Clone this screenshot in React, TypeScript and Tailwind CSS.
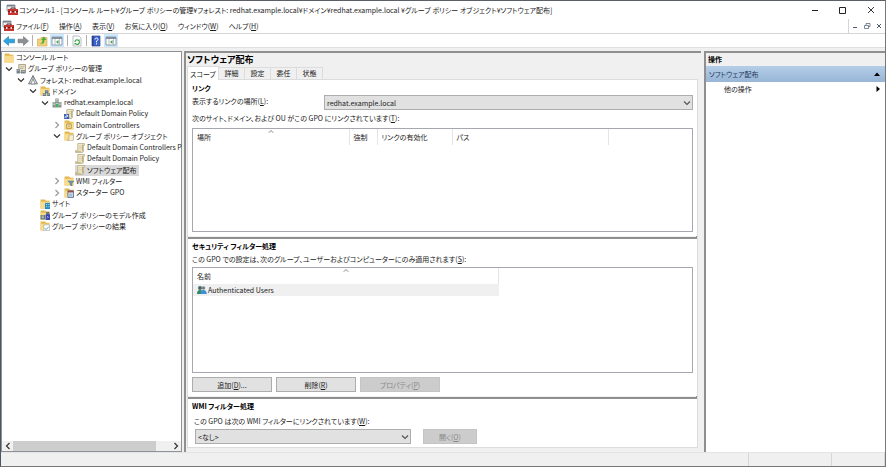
import React from 'react';

type IconKind =
  | 'folder'
  | 'manage'
  | 'forest'
  | 'domains'
  | 'domain'
  | 'link'
  | 'ou'
  | 'gpoFolder'
  | 'scroll'
  | 'wmi'
  | 'starter'
  | 'site'
  | 'model'
  | 'result';

interface TreeItem {
  label: string;
  icon: IconKind;
  indent: string;
  state?: 'open' | 'closed';
  selected?: boolean;
}

const treeItems: TreeItem[] = [
  { label: 'コンソール ルート', icon: 'folder', indent: 'pl-0' },
  { label: 'グループ ポリシーの管理', icon: 'manage', indent: 'pl-[1px]', state: 'open' },
  { label: 'フォレスト: redhat.example.local', icon: 'forest', indent: 'pl-[13px]', state: 'open' },
  { label: 'ドメイン', icon: 'domains', indent: 'pl-[25px]', state: 'open' },
  { label: 'redhat.example.local', icon: 'domain', indent: 'pl-[37px]', state: 'open' },
  { label: 'Default Domain Policy', icon: 'link', indent: 'pl-[60px]' },
  { label: 'Domain Controllers', icon: 'ou', indent: 'pl-[49px]', state: 'closed' },
  { label: 'グループ ポリシー オブジェクト', icon: 'gpoFolder', indent: 'pl-[49px]', state: 'open' },
  { label: 'Default Domain Controllers P', icon: 'scroll', indent: 'pl-[71px]' },
  { label: 'Default Domain Policy', icon: 'scroll', indent: 'pl-[71px]' },
  { label: 'ソフトウェア配布', icon: 'scroll', indent: 'pl-[71px]', selected: true },
  { label: 'WMI フィルター', icon: 'wmi', indent: 'pl-[49px]', state: 'closed' },
  { label: 'スターター GPO', icon: 'starter', indent: 'pl-[49px]', state: 'closed' },
  { label: 'サイト', icon: 'site', indent: 'pl-9' },
  { label: 'グループ ポリシーのモデル作成', icon: 'model', indent: 'pl-9' },
  { label: 'グループ ポリシーの結果', icon: 'result', indent: 'pl-9' },
];

const menus = [
  { label: 'ファイル', accel: 'F' },
  { label: '操作', accel: 'A' },
  { label: '表示', accel: 'V' },
  { label: 'お気に入り', accel: 'O' },
  { label: 'ウィンドウ', accel: 'W' },
  { label: 'ヘルプ', accel: 'H' },
];

const Accel = ({ k }: { k: string }) => (
  <>
    (<span className="underline">{k}</span>)
  </>
);

const FolderShape = () => (
  <>
    <path d="M1 1h4l1 1h3v7H1z" fill="#e2b84e" />
    <path d="M1 3h8v6H1z" fill="#f8dc8c" />
  </>
);

const ScrollShape = () => (
  <>
    <path d="M3 1h6v1.500H8V8q0 1-1 1H1V7.500h2z" fill="#f4ecca" stroke="#a39a78" strokeWidth=".6" />
    <path d="M4 3h3M4 4.500h3M4 6h3" stroke="#c3b88f" strokeWidth=".5" />
    <path d="M1 7.500h5V9H1z" fill="#c9bd8d" />
    <path d="M7.300 2v6" stroke="#b0a06a" strokeWidth=".7" />
  </>
);

const TreeIcon = ({ kind }: { kind: IconKind }) => (
  <svg viewBox="0.500 0.500 9 9" className="h-[10px] w-[10px] shrink-0" aria-hidden="true">
    {kind === 'folder' && <FolderShape />}
    {kind === 'manage' && (
      <>
        <path d="M3 1h6v7H2V7h1z" fill="#eee6c4" stroke="#817b68" strokeWidth=".6" />
        <path d="M4 3h4M4 4.500h3" stroke="#8e8872" strokeWidth=".5" />
        <path d="M1 5h3v4H1zM5 6h4v3H5z" fill="#77818a" />
        <path d="M1.500 6h2M5.500 7h3" stroke="#dce3e8" strokeWidth=".6" />
      </>
    )}
    {kind === 'forest' && (
      <>
        <path d="M5 1 9 8.500H1z" fill="#d9dde0" stroke="#666e74" strokeWidth=".8" />
        <path d="m5 4 1.800 4.500H3.200zM5 1v3" fill="#fff" stroke="#666e74" strokeWidth=".6" />
      </>
    )}
    {kind === 'domains' && (
      <>
        <FolderShape />
        <path d="M5 4h3v3H5zM3 7h3v2.500H3zM7 7h2.500v2.500H7z" fill="#63798b" />
        <path d="M5.500 5h2M3.500 8h2M7.500 8H9" stroke="#cfe1ed" strokeWidth=".6" />
      </>
    )}
    {kind === 'domain' && (
      <>
        <path d="M3.500 1h3v4h-3zM1 4h3v5H1zM6 4h3v5H6z" fill="#84918b" />
        <path d="M4 2h2M4 3.300h2M1.500 5h2M1.500 6.500h2M6.500 5h2M6.500 6.500h2" stroke="#e2efe7" strokeWidth=".6" />
        <path d="M4 5.500h2V9H4z" fill="#43b45c" />
      </>
    )}
    {kind === 'link' && (
      <>
        <ScrollShape />
        <path d="M.5 5h4.500v4.500H.5z" fill="#3f63b5" />
        <path d="M1.300 8.700q0-2 2-2M2.500 5.600 4.200 6.700 2.500 7.900" fill="none" stroke="#fff" strokeWidth=".7" />
      </>
    )}
    {kind === 'ou' && (
      <>
        <FolderShape />
        <path d="M3 4h4v4H3z" fill="#fff0b5" stroke="#967329" strokeWidth=".6" />
        <path d="M4 5h2M4 6.500h2" stroke="#967329" strokeWidth=".5" />
      </>
    )}
    {kind === 'gpoFolder' && (
      <>
        <FolderShape />
        <path d="M5 4h4v4l-1 1.300H4V8h1z" fill="#f6f0d8" stroke="#a39a78" strokeWidth=".5" />
      </>
    )}
    {kind === 'scroll' && <ScrollShape />}
    {kind === 'wmi' && (
      <>
        <FolderShape />
        <path d="M4 5h5.500L7.700 7v2.500L6 8.500V7z" fill="#7095b5" stroke="#4c6a84" strokeWidth=".4" />
      </>
    )}
    {kind === 'starter' && (
      <>
        <FolderShape />
        <path d="M4 3h5v6H4z" fill="#dce9f6" stroke="#52749c" strokeWidth=".8" />
        <path d="M4 3h5v1.500H4z" fill="#a04b42" />
        <path d="M5 6h3M5 7.500h3" stroke="#52749c" strokeWidth=".5" />
      </>
    )}
    {kind === 'site' && (
      <>
        <FolderShape />
        <path d="M5 4h4.500v5.500H5z" fill="#258bc4" />
        <path d="M6 5h1v1H6zM8 5h1v1H8zM6 7h1v1H6zM8 7h1v1H8z" fill="#b8e3f8" />
      </>
    )}
    {kind === 'model' && (
      <>
        <FolderShape />
        <path d="M1 5h4v4H1zM6 2h3v3H6z" fill="#66777f" />
        <path d="M5.500 4.500h4v5h-4z" fill="#3646b4" />
        <path d="M2 6h2M2 7.500h2M7 6l1 1-1 1" fill="none" stroke="#fff" strokeWidth=".6" />
      </>
    )}
    {kind === 'result' && (
      <>
        <FolderShape />
        <path d="M4 4h5.200v5.200H4z" fill="#fff" stroke="#8da2b4" strokeWidth=".5" />
        <path d="m5 7 1 1.200L8.500 5.500" fill="none" stroke="#3487bd" strokeWidth=".7" />
      </>
    )}
  </svg>
);

const ConsoleIcon = () => (
  <svg viewBox="0 0 12 12" className="h-3 w-3 shrink-0" aria-hidden="true">
    <path d="M1 1h8v6H1z" fill="#e9edf0" stroke="#78858f" strokeWidth=".8" />
    <path d="M1 1h8v1.500H1z" fill="#74828d" />
    <path d="M5 5V4h4v1" fill="none" stroke="#6d1c1c" />
    <path d="M2 5h10v6H2z" fill="#c4352f" />
    <path d="M2 7.500h10" stroke="#7e1715" />
    <path d="M4 7h1.500v2H4zM8.500 7H10v2H8.500z" fill="#f2dcdc" />
  </svg>
);

const Chevron = ({ className, d }: { className: string; d: string }) => (
  <svg viewBox="0 0 8 8" className={className} aria-hidden="true">
    <path d={d} fill="none" stroke="currentColor" strokeWidth="1.200" />
  </svg>
);

const DOWN = 'm1 2.500 3 3 3-3';
const UP = 'm1 5 3-3 3 3';
const RIGHT = 'm2.500 1 3 3-3 3';
const LEFT = 'm5.500 1-3 3 3 3';

const ToolbarSeparator = () => <span className="mx-[3px] h-[11px] w-px bg-[#b0b0b0]" />;

const PanelIcon = () => (
  <svg viewBox="0 0 12 12" className="h-3 w-3" aria-hidden="true">
    <path d="M1 2h10v8H1z" fill="#fff" stroke="#7c8790" strokeWidth=".8" />
    <path d="M1 2h10v2H1z" fill="#84919c" />
    <path d="M4 4v6M8.500 4v6" stroke="#9ca7af" strokeWidth=".7" />
    <path d="M7.500 5 5 7l2.500 2z" fill="#38a24b" />
  </svg>
);

const Toolbar = () => (
  <div className="flex h-[14px] items-center border-t border-[#d5d5d5] bg-white pl-[2px]">
    <button type="button" aria-label="戻る">
      <svg viewBox="0 0 12 12" className="h-3 w-3">
        <path d="M.5 6 5.500 1.500v2.700H11.500v3.600h-6v2.700z" fill="#2da3e0" stroke="#1679b4" strokeWidth=".6" />
      </svg>
    </button>
    <button type="button" aria-label="進む" className="ml-[2px]">
      <svg viewBox="0 0 12 12" className="h-3 w-3">
        <path d="M11.500 6 6.500 1.500v2.700H1v3.600h5.500v2.700z" fill="#8b8f92" stroke="#707477" strokeWidth=".6" />
      </svg>
    </button>
    <ToolbarSeparator />
    <button type="button" aria-label="上へ">
      <svg viewBox="0 0 12 12" className="h-3 w-3">
        <path d="M1.500 4h2.500l1-1.500h6V11H1.500z" fill="#f3d27c" stroke="#c79a35" strokeWidth=".5" />
        <path d="M3.500 8.500q3 0 3-3.500H5l2.800-3.500L10.500 5H8.500q0 5-5 3.500" fill="#4cae3f" />
      </svg>
    </button>
    <button
      type="button"
      aria-label="コンソール ツリーの表示"
      className="ml-[2px] flex h-full items-center border-x border-[#cce8ff] bg-[#cce8ff]"
    >
      <PanelIcon />
    </button>
    <ToolbarSeparator />
    <button type="button" aria-label="最新の情報に更新">
      <svg viewBox="0 0 12 12" className="h-3 w-3">
        <path d="M2 1h6l2 2v8H2z" fill="#fff" stroke="#9aa3a9" strokeWidth=".7" />
        <path d="M4 7a2 2 0 0 1 3.500-1.500M8 6a2 2 0 0 1-3.500 2.500" fill="none" stroke="#2e9c3c" strokeWidth="1.100" />
        <path d="M6.500 6h2V4zM5.500 8h-2v2z" fill="#2e9c3c" />
      </svg>
    </button>
    <ToolbarSeparator />
    <button type="button" aria-label="ヘルプ">
      <svg viewBox="0 0 12 12" className="h-3 w-3">
        <path d="M2 1h8v10H2z" fill="#3d63cf" stroke="#2b468f" strokeWidth=".7" />
        <path d="M2 1h1.500v10H2z" fill="#24408e" />
        <path d="M5 4.500q0-1.500 1.500-1.500T8 4.500q0 .8-1.500 1.500v1.300M6.500 8.200v1.200" fill="none" stroke="#fff" />
      </svg>
    </button>
    <button
      type="button"
      aria-label="操作ウィンドウの表示"
      className="ml-[2px] flex h-full items-center border-x border-[#cce8ff] bg-[#cce8ff]"
    >
      <PanelIcon />
    </button>
  </div>
);

const TitleBar = () => (
  <header className="flex h-[18px] items-center pl-[5px]">
    <ConsoleIcon />
    <h1 className="ml-[1px] flex-1 truncate">
      コンソール1 - [コンソール ルート¥グループ ポリシーの管理¥フォレスト: redhat.example.local¥ドメイン¥redhat.example.local ¥グループ ポリシー オブジェクト¥ソフトウェア配布]
    </h1>
    <button type="button" aria-label="最小化" className="flex w-7 justify-center">
      <svg viewBox="0 0 8 8" className="h-2 w-2">
        <path d="M1 4.500h6" stroke="#222" />
      </svg>
    </button>
    <button type="button" aria-label="最大化" className="flex w-7 justify-center">
      <svg viewBox="0 0 8 8" className="h-2 w-2">
        <path d="M.5 1.500h6v6h-6z" fill="none" stroke="#222" />
      </svg>
    </button>
    <button type="button" aria-label="閉じる" className="flex w-7 justify-center">
      <svg viewBox="0 0 8 8" className="h-2 w-2">
        <path d="m1 1 6 6M7 1 1 7" stroke="#222" strokeWidth=".9" />
      </svg>
    </button>
  </header>
);

const MenuBar = () => (
  <nav className="flex h-[14px] items-center pl-[1px]">
    <ConsoleIcon />
    <div className="ml-[2px] flex flex-1 gap-[10px]">
      {menus.map(menu => (
        <button key={menu.accel} type="button">
          {menu.label}
          <Accel k={menu.accel} />
        </button>
      ))}
    </div>
    <div className="flex h-full items-center gap-1 border-l border-[#d5d5d5] pr-[2px] pl-[2px] text-[#4a5a70]">
      <button type="button" aria-label="子ウィンドウを最小化">
        <svg viewBox="0 0 8 8" className="h-2 w-2">
          <path d="M2 5.500h4" stroke="currentColor" />
        </svg>
      </button>
      <button type="button" aria-label="子ウィンドウを元に戻す">
        <svg viewBox="0 0 8 8" className="h-2 w-2">
          <path d="M3 3V1.500h4v3H5.500M1.500 3.500h4v3h-4z" fill="none" stroke="currentColor" strokeWidth=".7" />
        </svg>
      </button>
      <button type="button" aria-label="子ウィンドウを閉じる">
        <svg viewBox="0 0 8 8" className="h-2 w-2">
          <path d="m2 2 4 4M6 2 2 6" stroke="currentColor" />
        </svg>
      </button>
    </div>
  </nav>
);

const ConsoleTree = () => (
  <aside className="flex w-[181px] shrink-0 flex-col border border-[#8d9299] bg-white">
    <ul className="grid h-[180px] auto-rows-fr pl-[2px]">
      {treeItems.map((item, index) => (
        <li key={index} className={`flex items-center whitespace-nowrap ${item.indent}`}>
          {item.state && (
            <Chevron
              className={`mr-[3px] h-2 w-2 shrink-0 ${item.state === 'open' ? 'text-[#333]' : 'text-[#999]'}`}
              d={item.state === 'open' ? DOWN : RIGHT}
            />
          )}
          <span className={`flex items-center ${item.selected ? 'bg-[#d9d9d9] pr-[2px]' : ''}`}>
            <TreeIcon kind={item.icon} />
            <span className="ml-[2px] leading-[11px]">{item.label}</span>
          </span>
        </li>
      ))}
    </ul>
    <div className="mt-auto flex h-[10px] items-center bg-[#f0f0f0] text-[#333]">
      <button type="button" aria-label="左へスクロール" className="flex w-[11px] justify-center">
        <Chevron className="h-2 w-2" d={LEFT} />
      </button>
      <div className="flex h-full flex-1">
        <div className="h-full w-[91%] bg-[#cdcdcd]" />
      </div>
      <button type="button" aria-label="右へスクロール" className="flex w-[11px] justify-center">
        <Chevron className="h-2 w-2" d={RIGHT} />
      </button>
    </div>
  </aside>
);

const Divider = () => <div className="-mx-1 mt-1 h-[3px] border-r border-b-2 border-[#8f8f8f] bg-[#f0f0f0]" />;

const ScopeTab = () => (
  <div className="flex flex-1 flex-col border border-[#dcdcdc] bg-white px-1">
    <section>
      <h3 className="pt-[2px] leading-3 font-bold text-black">リンク</h3>
      <div className="flex items-start pt-[1px]">
        <label htmlFor="link-location" className="w-[132px] shrink-0 leading-3">
          表示するリンクの場所
          <Accel k="L" />:
        </label>
        <div className="relative flex-1">
          <select id="link-location" className="h-[15px] w-full appearance-none border border-[#adadad] bg-[#e1e1e1] pl-[2px]">
            <option>redhat.example.local</option>
          </select>
          <Chevron className="pointer-events-none absolute top-1 right-[2px] h-2 w-2 text-[#555]" d={DOWN} />
        </div>
      </div>
      <p className="pt-[2px] leading-3">
        次のサイト、ドメイン、および OU がこの GPO にリンクされています
        <Accel k="T" />:
      </p>
      <div className="relative mt-1 h-[104px] border border-[#a5a8b0]">
        <table className="w-full table-fixed text-left leading-4">
          <thead>
            <tr>
              <th className="w-[156px] border-r border-[#e5e5e5] pl-1 font-normal">場所</th>
              <th className="w-7 border-r border-[#e5e5e5] pl-1 font-normal">強制</th>
              <th className="w-[75px] border-r border-[#e5e5e5] pl-1 font-normal">リンクの有効化</th>
              <th className="w-[156px] border-r border-[#e5e5e5] pl-1 font-normal">パス</th>
              <td />
            </tr>
          </thead>
        </table>
        <Chevron className="absolute top-0 left-[75px] h-[6px] w-[6px] text-[#777]" d={UP} />
      </div>
    </section>
    <Divider />
    <section>
      <h3 className="pt-[1px] leading-3 font-bold text-black">セキュリティ フィルター処理</h3>
      <p className="pt-[1px] leading-3">
        この GPO での設定は、次のグループ、ユーザーおよびコンピューターにのみ適用されます
        <Accel k="S" />:
      </p>
      <div className="relative mt-[2px] h-[106px] border border-[#a5a8b0]">
        <table className="w-[306px] text-left">
          <thead>
            <tr>
              <th className="h-4 border-r border-[#e5e5e5] pl-1 font-normal">名前</th>
            </tr>
          </thead>
          <tbody>
            <tr>
              <td className="bg-[#f0f0f0] pl-1">
                <span className="flex h-3 items-center gap-px">
                  <svg viewBox="0 0 10 10" className="h-[10px] w-[10px]" aria-hidden="true">
                    <circle cx="3" cy="3" r="2" fill="#496a63" />
                    <path d="M0 9q0-4 3-4t3 4z" fill="#2f8a63" />
                    <circle cx="6.500" cy="3" r="1.800" fill="#76868c" />
                    <path d="M3.500 9q0-4 3-4t3.300 4z" fill="#3d8fd6" />
                  </svg>
                  Authenticated Users
                </span>
              </td>
            </tr>
          </tbody>
        </table>
        <Chevron className="absolute top-0 left-[150px] h-[6px] w-[6px] text-[#777]" d={UP} />
      </div>
      <div className="flex gap-1 pt-1">
        <button type="button" className="h-[15px] w-20 border border-[#adadad] bg-[#e1e1e1]">
          追加
          <Accel k="D" />...
        </button>
        <button type="button" className="h-[15px] w-20 border border-[#adadad] bg-[#e1e1e1]">
          削除
          <Accel k="R" />
        </button>
        <button type="button" disabled className="h-[15px] w-20 border border-[#c4c4c4] bg-[#cccccc] text-[#8a8a8a]">
          プロパティ
          <Accel k="P" />
        </button>
      </div>
    </section>
    <Divider />
    <section>
      <h3 className="pt-[1px] leading-3 font-bold text-black">WMI フィルター処理</h3>
      <label htmlFor="wmi-filter" className="block pt-[3px] pl-[2px] leading-3">
        この GPO は次の WMI フィルターにリンクされています
        <Accel k="W" />:
      </label>
      <div className="flex pt-[2px] pl-[3px]">
        <div className="relative">
          <select id="wmi-filter" className="h-[15px] w-[216px] appearance-none border border-[#adadad] bg-[#e1e1e1] pl-[2px]">
            <option>&lt;なし&gt;</option>
          </select>
          <Chevron className="pointer-events-none absolute top-1 right-[2px] h-2 w-2 text-[#555]" d={DOWN} />
        </div>
        <button type="button" disabled className="ml-3 h-[15px] w-[54px] border border-[#c4c4c4] bg-[#cccccc] text-[#8a8a8a]">
          開く
          <Accel k="O" />
        </button>
      </div>
    </section>
  </div>
);

const tabs = ['スコープ', '詳細', '設定', '委任', '状態'];

const DetailPane = () => (
  <main className="flex min-w-0 flex-1 flex-col border-t-2 border-l-2 border-[#8f8f8f] bg-[#f0f0f0] pr-[3px] pb-1 pl-[1px]">
    <h2 className="text-[9px] leading-[13px] font-bold text-black">ソフトウェア配布</h2>
    <div role="tablist" className="relative z-10 -mb-px flex items-end">
      {tabs.map((tab, index) => (
        <button
          key={tab}
          type="button"
          role="tab"
          aria-selected={index === 0}
          className={
            index === 0
              ? 'h-[14px] w-8 border border-b-0 border-[#dcdcdc] bg-white whitespace-nowrap'
              : 'mb-px h-3 w-[26px] border border-b-0 border-l-0 border-[#dcdcdc] leading-[11px]'
          }
        >
          {tab}
        </button>
      ))}
    </div>
    <ScopeTab />
  </main>
);

const ActionsPane = () => (
  <aside className="ml-[1px] w-[181px] shrink-0 border-t-2 border-l-2 border-[#8f8f8f] bg-white">
    <h2 className="h-[13px] bg-[#f0f0f0] pl-[2px] leading-[13px] font-bold text-black">操作</h2>
    <button
      type="button"
      className="flex h-4 w-full items-center justify-between bg-linear-to-b from-[#b5cee8] to-[#98b5d6] pr-[5px] pl-[3px] text-[#1e395b]"
    >
      ソフトウェア配布
      <svg viewBox="0 0 6 6" className="h-[6px] w-[6px]" aria-hidden="true">
        <path d="m0 5 3-3.500L6 5z" fill="#000" />
      </svg>
    </button>
    <button type="button" className="flex h-[14px] w-full items-center justify-between pr-1 pl-[18px]">
      他の操作
      <svg viewBox="0 0 6 6" className="h-[6px] w-[6px]" aria-hidden="true">
        <path d="m1.500 0 3.500 3-3.500 3z" fill="#000" />
      </svg>
    </button>
  </aside>
);

const App: React.FC = () => (
  <div
    lang="ja"
    className="flex min-h-screen flex-col border border-t-[#5b5f66] border-r-[#777] border-b-[#777] border-l-[#4b5563] bg-white font-['Noto_Sans_CJK_JP',sans-serif] text-[7px] leading-3 text-[#1a1a1a] [font-feature-settings:'palt']"
  >
    <TitleBar />
    <MenuBar />
    <Toolbar />
    <div className="flex flex-1 gap-[2px] border-t border-[#e0e0e0] bg-[#f0f0f0] pt-[3px]">
      <ConsoleTree />
      <DetailPane />
      <ActionsPane />
    </div>
    <footer className="flex h-[14px] justify-end border-t border-[#e4e4e4] bg-[#f0f0f0]">
      <span className="w-[83px] border-l border-[#d7d7d7]" />
      <span className="w-[54px] border-x border-[#d7d7d7]" />
    </footer>
  </div>
);

export default App;
